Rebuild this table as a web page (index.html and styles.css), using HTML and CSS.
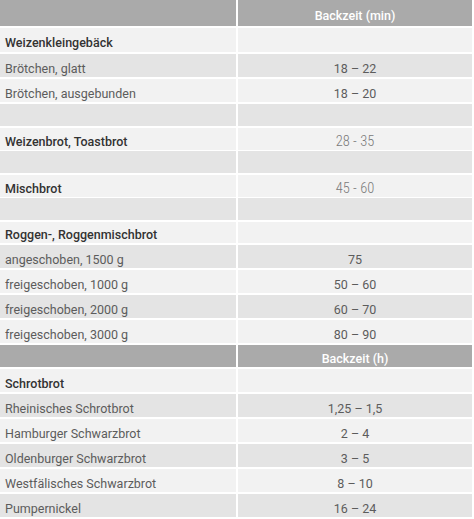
FILE: index.html
```html
<!DOCTYPE html>
<html lang="de">
<head>
<meta charset="utf-8">
<title>Backzeiten</title>
<link rel="stylesheet" href="styles.css">
</head>
<body>
<div class="table">
  <div class="row head first"><div class="cell"></div><div class="cell val">Backzeit (min)</div></div>
  <div class="row light tall"><div class="cell cat">Weizenkleingebäck</div><div class="cell val"></div></div>
  <div class="row dark"><div class="cell">Brötchen, glatt</div><div class="cell val">18 – 22</div></div>
  <div class="row light"><div class="cell">Brötchen, ausgebunden</div><div class="cell val">18 – 20</div></div>
  <div class="row dark short"><div class="cell"></div><div class="cell val"></div></div>
  <div class="row light short"><div class="cell cat">Weizenbrot, Toastbrot</div><div class="cell val narrow">28 - 35</div></div>
  <div class="row dark short"><div class="cell"></div><div class="cell val"></div></div>
  <div class="row light short"><div class="cell cat">Mischbrot</div><div class="cell val narrow">45 - 60</div></div>
  <div class="row dark short"><div class="cell"></div><div class="cell val"></div></div>
  <div class="row light short"><div class="cell cat">Roggen-, Roggenmischbrot</div><div class="cell val"></div></div>
  <div class="row dark"><div class="cell">angeschoben, 1500 g</div><div class="cell val">75</div></div>
  <div class="row light"><div class="cell">freigeschoben, 1000 g</div><div class="cell val">50 – 60</div></div>
  <div class="row dark"><div class="cell">freigeschoben, 2000 g</div><div class="cell val">60 – 70</div></div>
  <div class="row light"><div class="cell">freigeschoben, 3000 g</div><div class="cell val">80 – 90</div></div>
  <div class="row head second"><div class="cell"></div><div class="cell val">Backzeit (h)</div></div>
  <div class="row light"><div class="cell cat">Schrotbrot</div><div class="cell val"></div></div>
  <div class="row dark"><div class="cell">Rheinisches Schrotbrot</div><div class="cell val">1,25 – 1,5</div></div>
  <div class="row light"><div class="cell">Hamburger Schwarzbrot</div><div class="cell val">2 – 4</div></div>
  <div class="row dark"><div class="cell">Oldenburger Schwarzbrot</div><div class="cell val">3 – 5</div></div>
  <div class="row light"><div class="cell">Westfälisches Schwarzbrot</div><div class="cell val">8 – 10</div></div>
  <div class="row dark"><div class="cell">Pumpernickel</div><div class="cell val">16 – 24</div></div>
</div>
</body>
</html>
```

FILE: styles.css
```css
html, body {
  margin: 0;
  padding: 0;
  background: #ffffff;
}

body {
  font-family: Roboto, "Liberation Sans", sans-serif;
  font-size: 12.5px;
  font-weight: 400;
  color: #5c5c5c;
}

.table {
  width: 472px;
  display: flex;
  flex-direction: column;
  gap: 2px;
}

.row {
  display: grid;
  grid-template-columns: 236px 234px;
  column-gap: 2px;
  height: 23px;
}

.row.first { height: 26px; }
.row.tall { height: 24px; }
.row.short { height: 21.5px; }
.row.second { height: 22px; }

.light .cell { background: #f2f2f2; }
.dark .cell { background: #e4e4e4; }
.head .cell {
  background: #aaaaaa;
  color: #ffffff;
  font-weight: 500;
}

.cell {
  display: flex;
  align-items: center;
  padding: 5px 0 0 5px;
  box-sizing: border-box;
  white-space: nowrap;
}

.cell.val {
  justify-content: center;
  padding-left: 0;
}

.cell.cat {
  font-weight: 500;
  color: #333333;
}

.cell.narrow {
  font-family: "Roboto Condensed", "Liberation Sans Narrow", "DejaVu Sans Condensed", sans-serif;
  font-weight: 300;
  font-size: 14.5px;
  color: #7a7a7a;
}
```
